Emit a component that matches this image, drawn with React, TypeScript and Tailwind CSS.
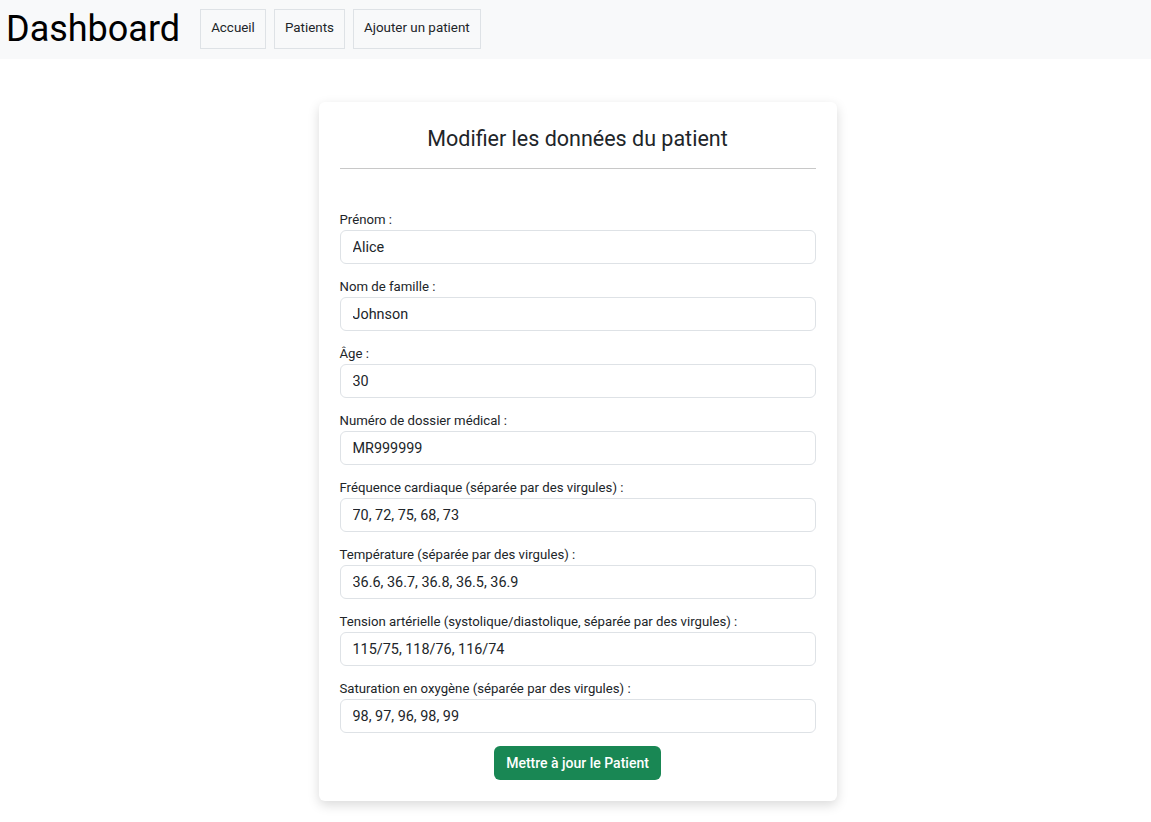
const fields = [
  { label: "Prénom :", value: "Alice" },
  { label: "Nom de famille :", value: "Johnson" },
  { label: "Âge :", value: "30" },
  { label: "Numéro de dossier médical :", value: "MR999999" },
  { label: "Fréquence cardiaque (séparée par des virgules) :", value: "70, 72, 75, 68, 73" },
  { label: "Température (séparée par des virgules) :", value: "36.6, 36.7, 36.8, 36.5, 36.9" },
  {
    label: "Tension artérielle (systolique/diastolique, séparée par des virgules) :",
    value: "115/75, 118/76, 116/74",
  },
  { label: "Saturation en oxygène (séparée par des virgules) :", value: "98, 97, 96, 98, 99" },
];

export default function App() {
  return (
    <div className="min-h-screen bg-white text-[#212529] font-['Roboto',sans-serif]">
      <nav className="h-[59px] bg-[#f8f9fa] flex items-center px-[6px]">
        <h1 className="text-[36px] leading-none text-black mr-[20px] -mt-[2px]">Dashboard</h1>
        <div className="flex gap-2 -mt-[2px]">
          {["Accueil", "Patients", "Ajouter un patient"].map((item) => (
            <button
              key={item}
              className="h-10 px-[10px] border border-[#dee2e6] bg-[#f8f9fa] text-[13.4px] text-[#212529]"
            >
              {item}
            </button>
          ))}
        </div>
      </nav>

      <div className="flex justify-center pt-[43px] pb-6 pl-1">
        <div className="w-[518px] bg-white rounded-md shadow-[0_4px_12px_rgba(0,0,0,0.15)] px-[21px] pt-[24px] pb-[21px]">
          <h2 className="text-[21.5px] leading-[26px] text-center">Modifier les données du patient</h2>
          <hr className="mt-[16px] mb-[42px] border-t border-[#c8c8c8]" />
          <form className="flex flex-col">
            {fields.map((f) => (
              <div key={f.label} className="mb-[14px]">
                <label className="block text-[13.2px] leading-[18px] mb-px">{f.label}</label>
                <input
                  readOnly
                  value={f.value}
                  className="w-full h-[34px] px-3 text-[14.4px] border border-[#dee2e6] rounded-md outline-none text-[#212529]"
                />
              </div>
            ))}
            <div className="flex justify-center -mt-px">
              <button
                type="button"
                className="h-[34px] px-3 bg-[#198754] text-white text-[14px] font-medium rounded-md"
              >
                Mettre à jour le Patient
              </button>
            </div>
          </form>
        </div>
      </div>
    </div>
  );
}
